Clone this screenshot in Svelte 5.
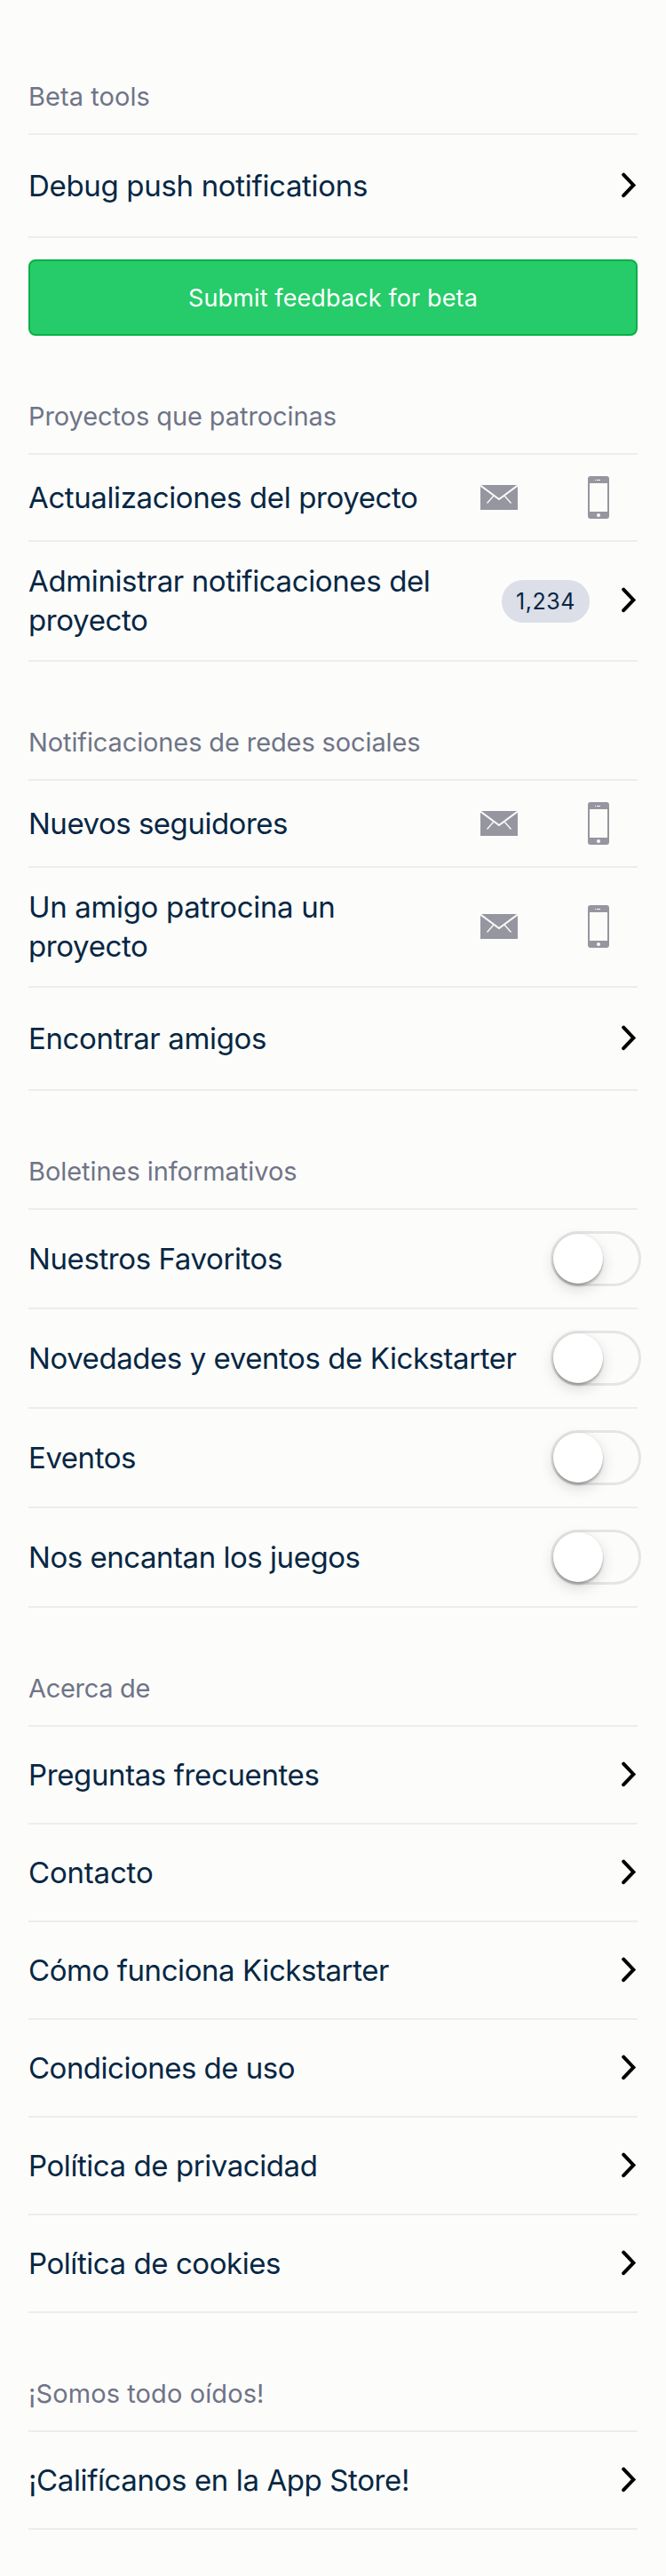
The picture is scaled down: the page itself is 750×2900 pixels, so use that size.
<script>
  const sections = [
    { title: 'Beta tools', width: 137, rows: [
      { kind: 'link', height: 114, lines: [['Debug push notifications', 382]] },
    ], button: true },
    { title: 'Proyectos que patrocinas', width: 347, rows: [
      { kind: 'channels', height: 96, lines: [['Actualizaciones del proyecto', 438.5]] },
      { kind: 'link', height: 133, badge: '1,234', lines: [['Administrar notificaciones del', 452.5], ['proyecto', 134.5]] },
    ] },
    { title: 'Notificaciones de redes sociales', width: 441.5, rows: [
      { kind: 'channels', height: 96, lines: [['Nuevos seguidores', 292]] },
      { kind: 'channels', height: 133, lines: [['Un amigo patrocina un', 345.5], ['proyecto', 134.5]] },
      { kind: 'link', height: 114, lines: [['Encontrar amigos', 268]] },
    ] },
    { title: 'Boletines informativos', width: 302.5, rows: [
      { kind: 'toggle', height: 110, lines: [['Nuestros Favoritos', 286]] },
      { kind: 'toggle', height: 110, lines: [['Novedades y eventos de Kickstarter', 549.5]] },
      { kind: 'toggle', height: 110, lines: [['Eventos', 121]] },
      { kind: 'toggle', height: 110, lines: [['Nos encantan los juegos', 373.5]] },
    ] },
    { title: 'Acerca de', width: 137, rows: [
      { kind: 'link', height: 108, lines: [['Preguntas frecuentes', 327.5]] },
      { kind: 'link', height: 108, lines: [['Contacto', 140.5]] },
      { kind: 'link', height: 108, lines: [['Cómo funciona Kickstarter', 406]] },
      { kind: 'link', height: 108, lines: [['Condiciones de uso', 300]] },
      { kind: 'link', height: 108, lines: [['Política de privacidad', 325.5]] },
      { kind: 'link', height: 108, lines: [['Política de cookies', 284]] },
    ] },
    { title: '¡Somos todo oídos!', width: 265.5, rows: [
      { kind: 'link', height: 108, lines: [['¡Califícanos en la App Store!', 429]] },
    ] },
  ];

  // Tracks a line of text so that it spans the given width.
  function fit(node, width) {
    const natural = node.getBoundingClientRect().width;
    node.style.letterSpacing = `${(width - natural) / node.textContent.length}px`;
  }
</script>

<main>
  {#each sections as section}
    <section>
      <h2><span use:fit={section.width}>{section.title}</span></h2>
      {#each section.rows as row}
        <div class="row" class:tall={row.lines.length > 1} style:height="{row.height}px">
          <div class="label">
            {#each row.lines as [text, width]}
              <div><span use:fit={width}>{text}</span></div>
            {/each}
          </div>
          {#if row.badge}
            <div class="badge"><span use:fit={67}>{row.badge}</span></div>
          {/if}
          {#if row.kind === 'link'}
            <svg class="chevron" width="18" height="30" viewBox="0 0 18 30">
              <path d="M2.2 2.6 13.4 14.4 2.2 26.2" fill="none" stroke="#000" stroke-width="4" stroke-linecap="round" />
            </svg>
          {:else if row.kind === 'channels'}
            <svg class="mail" width="42" height="28" viewBox="0 0 42 28">
              <path d="M0 0H42V28H0Z" fill="#9696a0" />
              <path d="M0 .5 21 16 42 .5" fill="none" stroke="#fcfcfa" stroke-width="2" />
              <path d="M15 12 7.5 20.5M27 12l7.5 8.5" stroke="#fcfcfa" stroke-width="1.3" />
            </svg>
            <svg class="phone" width="24" height="48" viewBox="0 0 24 48">
              <path fill-rule="evenodd" fill="#9696a0" d="M3 0H21a3 3 0 0 1 3 3V45a3 3 0 0 1-3 3H3a3 3 0 0 1-3-3V3a3 3 0 0 1 3-3ZM2 8V40H22V8ZM12 42a2 2 0 1 0 0 4a2 2 0 1 0 0-4ZM8 4V5H9V4ZM10 4V5H14V4Z" />
            </svg>
          {:else}
            <div class="switch"><i></i></div>
          {/if}
        </div>
      {/each}
      {#if section.button}
        <button><span use:fit={326}>Submit feedback for beta</span></button>
      {/if}
    </section>
  {/each}
</main>

<style>
  :global(body) { background: #fcfcfa; }
  main {
    box-sizing: border-box;
    width: 750px;
    height: 2900px;
    padding: 18px 32px 0;
    background: #fcfcfa;
    font-family: Inter, "Liberation Sans", sans-serif;
    font-kerning: normal;
    white-space: nowrap;
  }
  h2 {
    display: flex;
    align-items: flex-end;
    height: 109px;
    margin: 0;
    padding-bottom: 23px;
    border-bottom: 2px solid #ededeb;
    font-size: 29px;
    font-weight: 400;
    line-height: 36px;
    color: #6f7487;
  }
  .row {
    display: flex;
    align-items: center;
    border-bottom: 2px solid #ededeb;
  }
  .row.tall {
    box-sizing: border-box;
    min-height: 135px;
    padding-bottom: 1px;
  }
  .label {
    flex: 1;
    font-size: 33px;
    line-height: 44px;
    color: #062744;
  }
  .badge {
    display: flex;
    align-items: center;
    justify-content: center;
    width: 99px;
    height: 48px;
    margin: 1px 36px 0 0;
    border-radius: 24px;
    background: #dcdee8;
    font-size: 25px;
    color: #062744;
  }
  .chevron { flex: none; }
  .mail { flex: none; margin-right: 79px; }
  .phone { flex: none; margin-right: 32px; }
  .switch {
    box-sizing: border-box;
    flex: none;
    width: 102px;
    height: 62px;
    margin-right: -4px;
    border: 3px solid #e5e5e4;
    border-radius: 31px;
  }
  .switch i {
    display: block;
    width: 56px;
    height: 56px;
    border-radius: 50%;
    background: #fff;
    box-shadow: 0 0 0 1px rgba(0, 0, 0, 0.04), 0 6px 16px rgba(0, 0, 0, 0.15), 0 3px 2px rgba(0, 0, 0, 0.16), 0 3px 3px rgba(0, 0, 0, 0.08);
  }
  button {
    box-sizing: border-box;
    display: flex;
    align-items: center;
    justify-content: center;
    width: 100%;
    height: 86px;
    margin: 24px 0 0;
    padding: 0;
    border: 2px solid #09b044;
    border-radius: 8px;
    background: #25cc69;
    color: #fff;
    font: 400 27px Inter, "Liberation Sans", sans-serif;
  }
</style>
